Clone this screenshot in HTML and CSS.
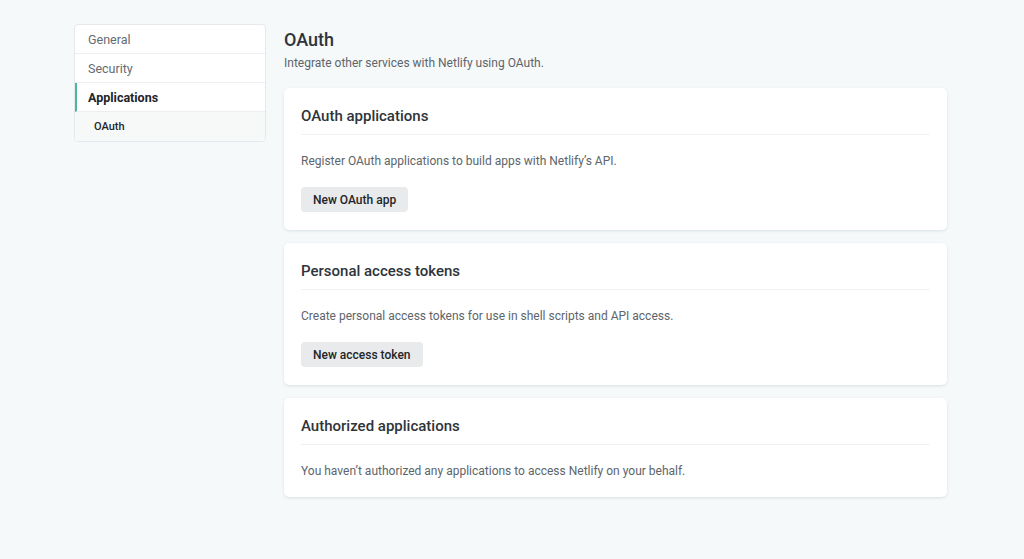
FILE: index.html
```html
<!DOCTYPE html>
<html>

<head>
  <meta charset="UTF-8">
  <meta name="viewport" content="width=device-width, initial-scale=1">
  <title>Applications - OAuth</title>
  <link rel="stylesheet" href="styles.css">
</head>

<body>
  <div class="page">
    <div class="sidebar">
      <div class="nav-item">General</div>
      <div class="nav-item">Security</div>
      <div class="nav-item active">Applications</div>
      <div class="nav-sub">OAuth</div>
    </div>
    <div class="main">
      <h1 class="title">OAuth</h1>
      <p class="subtitle">Integrate other services with Netlify using OAuth.</p>

      <div class="card">
        <h2 class="card-title">OAuth applications</h2>
        <p class="card-text">Register OAuth applications to build apps with Netlify’s API.</p>
        <button class="btn">New OAuth app</button>
      </div>

      <div class="card">
        <h2 class="card-title">Personal access tokens</h2>
        <p class="card-text">Create personal access tokens for use in shell scripts and API access.</p>
        <button class="btn">New access token</button>
      </div>

      <div class="card">
        <h2 class="card-title">Authorized applications</h2>
        <p class="card-text last">You haven’t authorized any applications to access Netlify on your behalf.</p>
      </div>
    </div>
  </div>
</body>

</html>
```

FILE: styles.css
```css
body {
  margin: 0;
  background-color: #f5f9fa;
  font-family: Roboto, "Noto Sans", sans-serif;
  color: #2e3439;
}

.page {
  display: flex;
  gap: 18px;
  width: 873px;
  margin-left: 74px;
  padding-top: 24px;
}

.sidebar {
  box-sizing: border-box;
  width: 192px;
  flex-shrink: 0;
  align-self: flex-start;
  background-color: #fff;
  border: 1px solid #e6e9eb;
  border-radius: 4px;
  overflow: hidden;
}

.nav-item {
  height: 28px;
  line-height: 29px;
  padding-left: 13px;
  font-size: 12.5px;
  color: #646c72;
  border-bottom: 1px solid #eceef0;
}

.nav-item.active {
  font-weight: 700;
  color: #1f2529;
  border-left: 2px solid #4fb3a4;
  padding-left: 11px;
}

.nav-sub {
  height: 29px;
  line-height: 30px;
  padding-left: 19px;
  font-size: 11px;
  font-weight: 500;
  color: #1f2529;
  background-color: #f7f8f8;
}

.main {
  flex: 1;
}

.title {
  margin: 4px 0 0;
  font-size: 18px;
  line-height: 24px;
  font-weight: 500;
  color: #2e3439;
}

.subtitle {
  margin: 2px 0 16px;
  font-size: 12px;
  line-height: 18px;
  color: #5d656b;
}

.card {
  background-color: #fff;
  border-radius: 5px;
  box-shadow: 0 1px 3px rgba(30, 50, 70, 0.12);
  padding: 18px 17px 18px;
  margin-bottom: 13px;
}

.card-title {
  margin: 0;
  padding-bottom: 8px;
  border-bottom: 1px solid #f0f2f3;
  font-size: 15px;
  line-height: 20px;
  font-weight: 500;
  color: #2e3439;
}

.card-text {
  margin: 18px 0 18px;
  font-size: 12px;
  line-height: 16px;
  color: #5d656b;
}

.card-text.last {
  margin-bottom: 0;
}

.btn {
  height: 25px;
  padding: 0 12px;
  border: none;
  border-radius: 4px;
  background-color: #e8eaeb;
  font-family: inherit;
  font-size: 12px;
  font-weight: 500;
  color: #1f2529;
}
```
